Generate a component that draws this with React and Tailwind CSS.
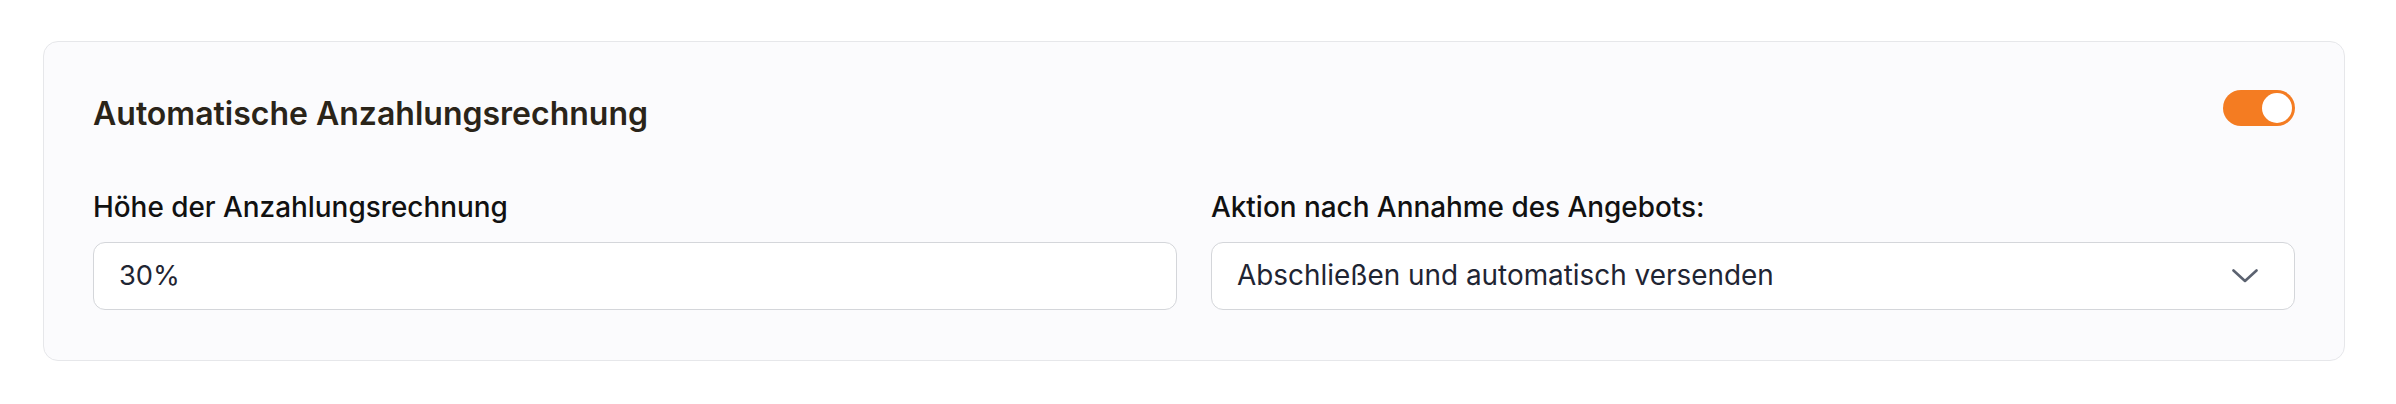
export default function App() {
  return (
    <div
      className="w-[2396px] h-[404px] bg-white pt-[41px] pl-[43px]"
      style={{ fontFamily: "Inter, 'Noto Sans', sans-serif" }}
    >
      <div className="w-[2302px] h-[320px] rounded-[15px] border border-[#e6e7ea] bg-[#fbfbfd] px-[49px] pt-[48px]">
        <div className="flex items-start justify-between">
          <h2 className="text-[32px] leading-[45px] mt-[1px] font-semibold text-[#2a2419]">
            Automatische Anzahlungsrechnung
          </h2>
          <button
            type="button"
            aria-pressed="true"
            className="h-[36px] w-[72px] rounded-full bg-[#f47c22] px-[3px] flex items-center justify-end"
          >
            <span className="block h-[30px] w-[30px] rounded-full bg-white" />
          </button>
        </div>
        <div className="mt-[52px] grid grid-cols-2 gap-[34px]">
          <div>
            <label className="block text-[27.9px] leading-[39px] font-medium text-[#111111]">
              Höhe der Anzahlungsrechnung
            </label>
            <div className="mt-[15px] h-[68px] rounded-[12px] border border-[#d4d6da] bg-white px-[25px] flex items-center text-[27.3px] text-[#1f2533]">
              30%
            </div>
          </div>
          <div>
            <label className="block text-[27.9px] leading-[39px] font-medium text-[#111111]">
              Aktion nach Annahme des Angebots:
            </label>
            <div className="mt-[15px] h-[68px] rounded-[12px] border border-[#d4d6da] bg-white pl-[25px] pr-[36px] flex items-center justify-between text-[27.9px] text-[#1f2533]">
              <span>Abschließen und automatisch versenden</span>
              <svg width="26" height="14" viewBox="0 0 26 14" fill="none">
                <path
                  d="M1.5 1.5 L13 12 L24.5 1.5"
                  stroke="#5b6270"
                  strokeWidth="2.6"
                  strokeLinecap="round"
                  strokeLinejoin="round"
                />
              </svg>
            </div>
          </div>
        </div>
      </div>
    </div>
  );
}
